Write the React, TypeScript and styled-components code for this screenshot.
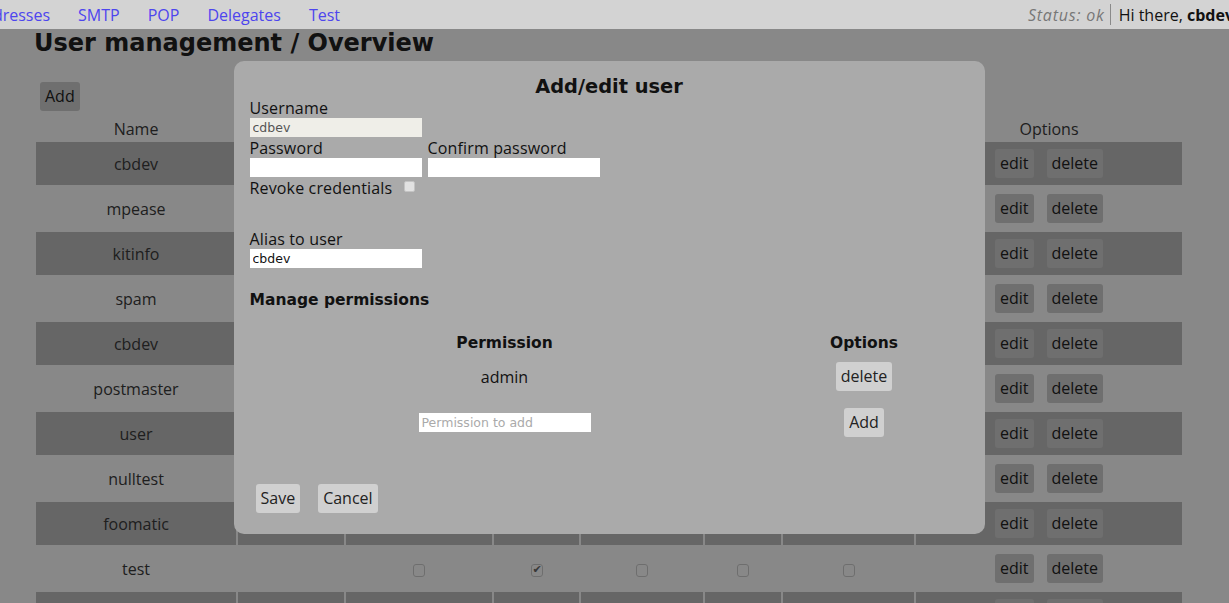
import React from "react";
import styled, { createGlobalStyle } from "styled-components";

const GlobalStyle = createGlobalStyle`
  html, body {
    margin: 0;
    padding: 0;
    background: #fff;
  }
  body {
    font-family: "Open Sans", "Liberation Sans", sans-serif;
    font-size: 16px;
    color: #3a3a3a;
    overflow: hidden;
  }
`;

type User = { name: string; perms: boolean[] };

const users: User[] = [
  { name: "cbdev", perms: [true, true, true, true, false] },
  { name: "mpease", perms: [false, true, true, false, false] },
  { name: "kitinfo", perms: [false, true, true, false, false] },
  { name: "spam", perms: [false, false, true, false, false] },
  { name: "cbdev", perms: [false, true, false, false, false] },
  { name: "postmaster", perms: [false, true, true, false, false] },
  { name: "user", perms: [false, true, true, false, false] },
  { name: "nulltest", perms: [false, false, false, false, false] },
  { name: "foomatic", perms: [false, true, true, false, false] },
  { name: "test", perms: [false, true, false, false, false] },
  { name: "admin", perms: [true, true, true, true, true] },
  { name: "mailer", perms: [false, true, true, false, false] },
];

const columns = [200, 106, 146, 85, 122, 76, 131, 266];

const App = () => {
  return (
    <>
      <GlobalStyle />
      <Nav>
        <NavLinks>
          <NavLink href="#">Addresses</NavLink>
          <NavLink href="#">SMTP</NavLink>
          <NavLink href="#">POP</NavLink>
          <NavLink href="#">Delegates</NavLink>
          <NavLink href="#">Test</NavLink>
        </NavLinks>
        <NavUser>
          <Status>Status: ok</Status>
          <Sep />
          <Greeting>
            Hi there, <b>cbdev</b>
          </Greeting>
        </NavUser>
      </Nav>

      <Main>
        <Title>User management / Overview</Title>
        <Toolbar>
          <Button>Add</Button>
        </Toolbar>
        <UserTable>
          <colgroup>
            {columns.map((w, i) => (
              <Col key={i} $w={w} />
            ))}
          </colgroup>
          <thead>
            <tr>
              <Th>Name</Th>
              <Th>Alias</Th>
              <Th>Admin</Th>
              <Th>SMTP</Th>
              <Th>POP</Th>
              <Th>Delegate</Th>
              <Th>Test</Th>
              <Th>Options</Th>
            </tr>
          </thead>
          <tbody>
            {users.map((u, i) => (
              <Row key={i} $dark={i % 2 === 0}>
                <Td>{u.name}</Td>
                <Td></Td>
                {u.perms.map((p, j) => (
                  <Td key={j}>
                    <Check type="checkbox" defaultChecked={p} />
                  </Td>
                ))}
                <Td>
                  <Options>
                    <Button>edit</Button>
                    <Button>delete</Button>
                  </Options>
                </Td>
              </Row>
            ))}
          </tbody>
        </UserTable>
      </Main>

      <Overlay />
      <Modal>
        <ModalTitle>Add/edit user</ModalTitle>
        <Field>
          <Label>Username</Label>
          <TextInput defaultValue="cdbev" disabled />
        </Field>
        <FieldRow>
          <Field>
            <Label>Password</Label>
            <TextInput type="password" />
          </Field>
          <Field>
            <Label>Confirm password</Label>
            <TextInput type="password" />
          </Field>
        </FieldRow>
        <CheckLine>
          Revoke credentials
          <SmallCheck type="checkbox" disabled />
        </CheckLine>
        <Field $spaced>
          <Label>Alias to user</Label>
          <TextInput defaultValue="cbdev" />
        </Field>

        <SubTitle>Manage permissions</SubTitle>
        <PermTable>
          <thead>
            <tr>
              <PermTh $w={510}>Permission</PermTh>
              <PermTh>Options</PermTh>
            </tr>
          </thead>
          <tbody>
            <tr>
              <PermTd>admin</PermTd>
              <PermTd>
                <Button>delete</Button>
              </PermTd>
            </tr>
            <tr>
              <PermTd>
                <TextInput placeholder="Permission to add" />
              </PermTd>
              <PermTd>
                <Button>Add</Button>
              </PermTd>
            </tr>
          </tbody>
        </PermTable>

        <Footer>
          <Button>Save</Button>
          <Button>Cancel</Button>
        </Footer>
      </Modal>
    </>
  );
};

const Nav = styled.nav`
  display: flex;
  justify-content: space-between;
  align-items: center;
  height: 29px;
  background: #d3d3d3;
  overflow: hidden;
  white-space: nowrap;
`;

const NavLinks = styled.div`
  display: flex;
  gap: 28px;
  margin-left: -27px;
`;

const NavLink = styled.a`
  color: #4d45ee;
  text-decoration: none;
`;

const NavUser = styled.div`
  display: flex;
  align-items: center;
  margin-right: -5px;
`;

const Status = styled.span`
  font-style: italic;
  color: #777;
  letter-spacing: 0.8px;
  padding-right: 5px;
`;

const Sep = styled.span`
  width: 1px;
  height: 21px;
  background: #8a8a8a;
  margin-right: 8px;
`;

const Greeting = styled.span`
  color: #111;

  b {
    font-weight: 700;
  }
`;

const Main = styled.main`
  padding-left: 34px;
`;

const Title = styled.h1`
  margin: 0;
  font: bold 24px/28px "DejaVu Sans", Verdana, sans-serif;
  color: #202020;
`;

const Toolbar = styled.div`
  margin-top: 25px;
`;

const Button = styled.button`
  font: 16px/20px "Open Sans", "Liberation Sans", sans-serif;
  color: #222;
  background: #d0d0d0;
  border: none;
  border-radius: 3px;
  padding: 4px 5px 5px;
  margin: 0 6px;
  cursor: pointer;
`;

const UserTable = styled.table`
  table-layout: fixed;
  width: 1150px;
  border-spacing: 2px;
  margin-top: 5px;
`;

const Col = styled.col<{ $w: number }>`
  width: ${(p) => p.$w}px;
`;

const Th = styled.th`
  font-weight: 400;
  line-height: 20px;
  padding: 1px 0;
  text-align: center;
`;

const Row = styled.tr<{ $dark: boolean }>`
  & > td {
    background: ${(p) => (p.$dark ? "#bfbfbf" : "transparent")};
  }
`;

const Td = styled.td`
  text-align: center;
  line-height: 20px;
  padding: 7px 0;
`;

const Check = styled.input`
  appearance: none;
  position: relative;
  width: 12px;
  height: 13px;
  margin: 0;
  vertical-align: middle;
  background: #fff;
  border: 1px solid #cfcfcf;
  border-radius: 3px;

  &:checked::after {
    content: "✔";
    position: absolute;
    left: 1px;
    top: -2px;
    font: 11px/14px "DejaVu Sans", sans-serif;
    color: #6a6a6a;
  }
`;

const Options = styled.div`
  display: flex;
  justify-content: center;
  gap: 1px;
`;

const Overlay = styled.div`
  position: fixed;
  top: 29px;
  left: 0;
  right: 0;
  bottom: 0;
  background: rgba(0, 0, 0, 0.467);
`;

const Modal = styled.div`
  position: fixed;
  top: 61px;
  left: calc(50% - 381px);
  width: 751px;
  box-sizing: border-box;
  padding: 14px 16px 21px;
  background: #aaa;
  border-radius: 10px;
  color: #111;
`;

const ModalTitle = styled.h2`
  margin: 0;
  text-align: center;
  font: bold 19.4px/23px "DejaVu Sans", Verdana, sans-serif;
`;

const Field = styled.div<{ $spaced?: boolean }>`
  display: flex;
  flex-direction: column;
  align-items: flex-start;
  margin-top: ${(p) => (p.$spaced ? "31px" : "0")};
`;

const FieldRow = styled.div`
  display: flex;
  gap: 6px;
`;

const Label = styled.label`
  line-height: 20px;
  letter-spacing: 0.15px;
`;

const TextInput = styled.input`
  width: 172px;
  height: 19px;
  box-sizing: border-box;
  border: none;
  outline: none;
  padding: 0 3px;
  margin: 0 0 1px;
  font: 12.5px "DejaVu Sans", Verdana, sans-serif;
  color: #111;
  background: #fff;

  &:disabled {
    background: #efeee8;
    color: #555;
  }

  &::placeholder {
    color: #aaa;
  }
`;

const CheckLine = styled.div`
  display: flex;
  align-items: center;
  line-height: 20px;
  letter-spacing: 0.15px;
`;

const SmallCheck = styled.input`
  appearance: none;
  width: 11px;
  height: 11px;
  margin: 0 0 3px 12px;
  background: #e2e2e2;
  border: 1px solid #c4c4c4;
  border-radius: 2px;
`;

const SubTitle = styled.h3`
  margin: 21px 0 0;
  font: bold 15.5px/20px "DejaVu Sans", Verdana, sans-serif;
`;

const PermTable = styled.table`
  width: 100%;
  border-spacing: 0 2px;
  margin-top: 21px;
`;

const PermTh = styled.th<{ $w?: number }>`
  width: ${(p) => (p.$w ? `${p.$w}px` : "auto")};
  padding: 0;
  text-align: center;
  font: bold 15.5px/20px "DejaVu Sans", Verdana, sans-serif;
`;

const PermTd = styled.td`
  text-align: center;
  padding: 7px 0 8px;
  line-height: 20px;

  input {
    margin: 0;
    vertical-align: top;
  }
`;

const Footer = styled.div`
  display: flex;
  gap: 6px;
  margin-top: 37px;
`;

export default App;
